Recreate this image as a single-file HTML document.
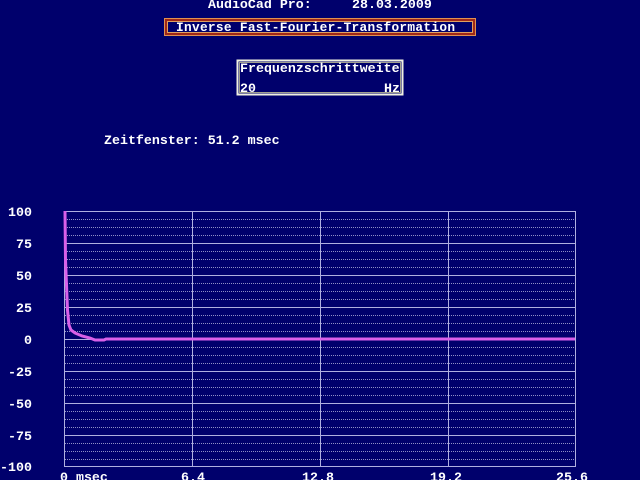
<!DOCTYPE html>
<html><head><meta charset="utf-8"><style>
html,body{margin:0;padding:0;background:#00006c;width:640px;height:480px;overflow:hidden}
svg{display:block}
text{font-family:"Liberation Mono","DejaVu Sans Mono",monospace;font-weight:bold;fill:#fff;font-size:13.3px}
</style></head><body>
<svg width="640" height="480" viewBox="0 0 640 480" xmlns="http://www.w3.org/2000/svg">
<rect width="640" height="480" fill="#00006c"/>
<text x="208" y="8">AudioCad Pro:</text>
<text x="352" y="8">28.03.2009</text>
<rect x="164.5" y="18.5" width="311" height="17" fill="none" stroke="#e09050" stroke-width="1"/>
<rect x="166" y="20" width="308" height="14" fill="none" stroke="#a02818" stroke-width="2"/>
<rect x="167.5" y="21.5" width="305" height="11" fill="none" stroke="#e0a060" stroke-width="1"/>
<text x="176" y="31" style="font-size:12.8px" textLength="279" lengthAdjust="spacing">Inverse Fast-Fourier-Transformation</text>
<rect x="237.5" y="60.5" width="165" height="34" fill="none" stroke="#f0f0e0" stroke-width="2"/>
<rect x="239.5" y="62.5" width="161" height="30" fill="none" stroke="#a0a090" stroke-width="1"/>
<text x="240" y="72">Frequenzschrittweite</text>
<text x="240" y="92">20</text>
<text x="384" y="92">Hz</text>
<text x="104" y="144">Zeitfenster: 51.2 msec</text>
<g stroke="#9090c8" stroke-width="1" stroke-dasharray="1 1" fill="none">
<path d="M65 219.5H575M65 227.5H575M65 235.5H575M65 251.5H575M65 259.5H575M65 267.5H575M65 283.5H575M65 291.5H575M65 299.5H575M65 315.5H575M65 323.5H575M65 331.5H575M65 347.5H575M65 355.5H575M65 363.5H575M65 379.5H575M65 387.5H575M65 395.5H575M65 411.5H575M65 419.5H575M65 427.5H575M65 443.5H575M65 451.5H575M65 459.5H575"/>
</g>
<g stroke="#b0b0e0" stroke-width="1" fill="none">
<path d="M64.5 211.5H575.5M64.5 243.5H575.5M64.5 275.5H575.5M64.5 307.5H575.5M64.5 339.5H575.5M64.5 371.5H575.5M64.5 403.5H575.5M64.5 435.5H575.5M64.5 466.5H575.5"/>
<path d="M64.5 211V467M192.5 211V467M320.5 211V467M448.5 211V467M575.5 211V467"/>
</g>
<path d="M65 211 L65.5 260 L66.5 285 L67.5 310 L69 325 L71 330 L75 333 L82 336 L90 338 L95 340 L104 340 L106 339 L575 339" stroke="#d860e8" stroke-width="3" fill="none"/>
<text x="8" y="216">100</text>
<text x="16" y="248">75</text>
<text x="16" y="280">50</text>
<text x="16" y="312">25</text>
<text x="24" y="344">0</text>
<text x="8" y="376">-25</text>
<text x="8" y="408">-50</text>
<text x="8" y="440">-75</text>
<text x="0" y="471">-100</text>
<text x="60" y="481">0 msec</text>
<text x="181" y="481">6.4</text>
<text x="302" y="481">12.8</text>
<text x="430" y="481">19.2</text>
<text x="556" y="481">25.6</text>
</svg>
</body></html>
